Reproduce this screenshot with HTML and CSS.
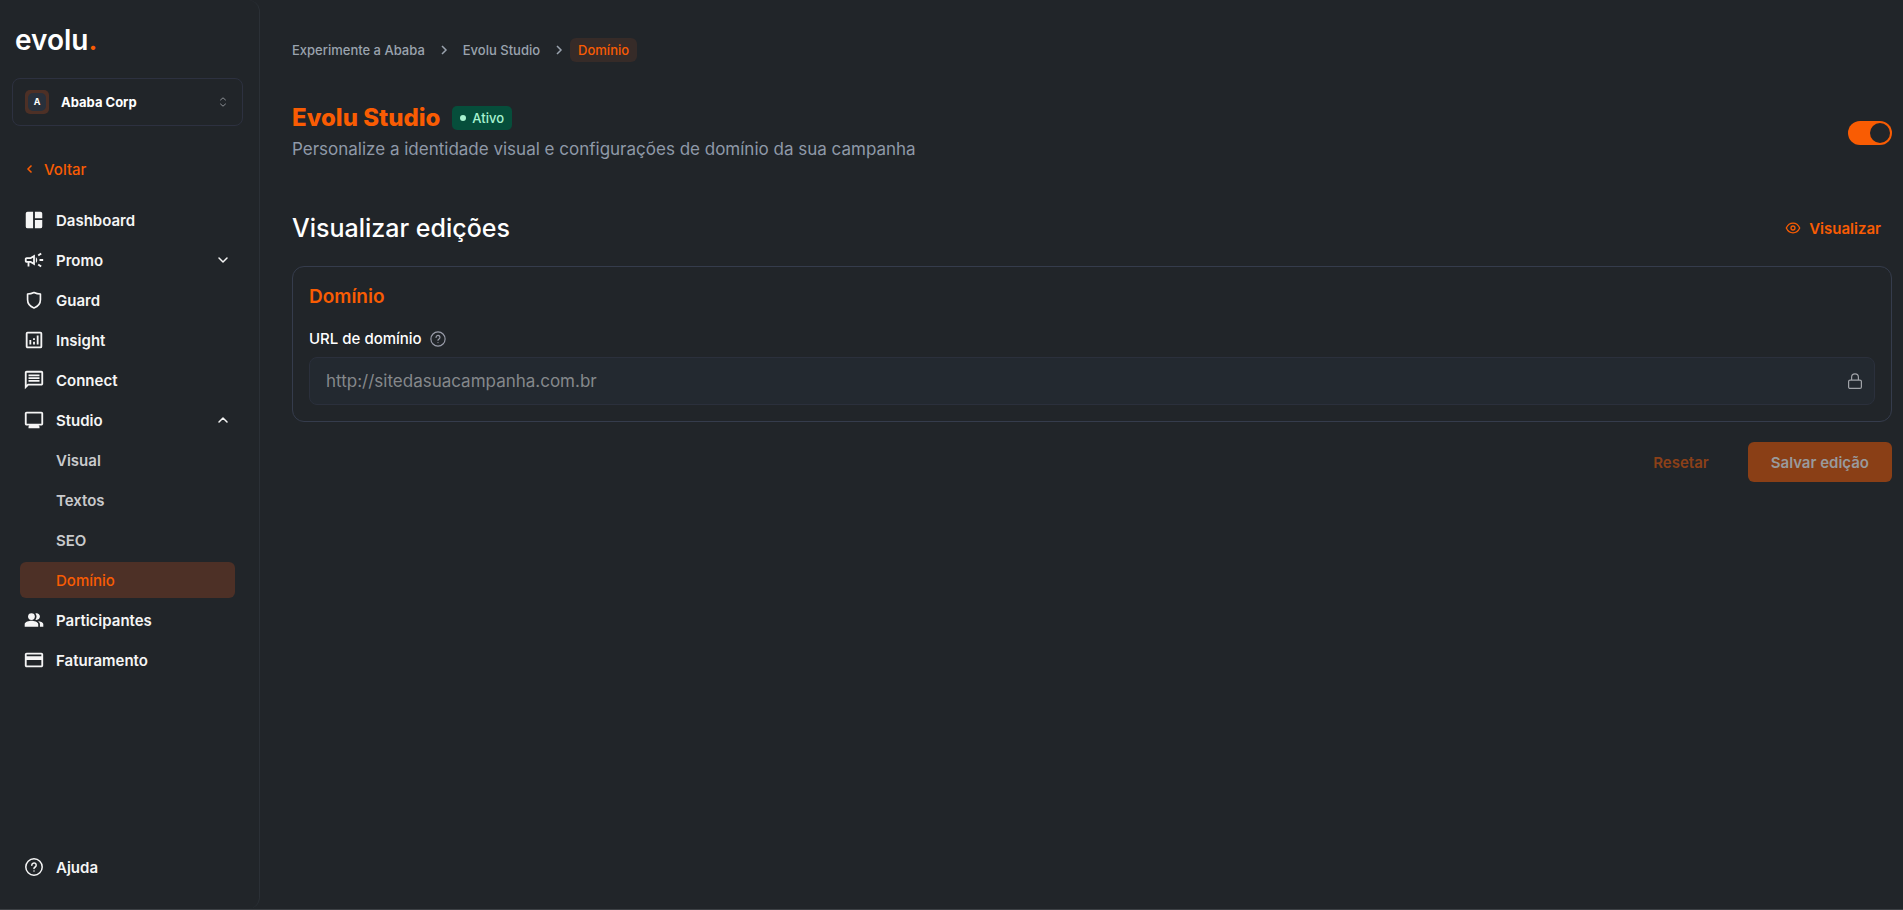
FILE: index.html
```html
<!DOCTYPE html>
<html lang="pt-BR">
    <head>
        <title>Evolu Studio - Domínio</title>
        <meta charset="utf-8" />
        <meta name="viewport" content="width=device-width, initial-scale=1">
        <link rel="stylesheet" href="styles.css">
    </head>

    <body>
        <div class="app">
            <aside class="sidebar">
                <a href="#" class="logo">evolu<span class="logo-dot">.</span></a>

                <button type="button" class="company">
                    <span class="company-avatar"><span class="company-letter">A</span></span>
                    <span class="company-name">Ababa Corp</span>
                    <svg class="company-arrows" width="14" height="14" viewBox="0 0 14 14" fill="none" stroke="currentColor" stroke-linecap="round" stroke-linejoin="round"><path d="M4.500 5 7 2.800 9.500 5M4.500 9 7 11.200 9.500 9"/></svg>
                </button>

                <a href="#" class="back">
                    <svg width="8" height="12" viewBox="0 0 8 12" fill="none" stroke="currentColor" stroke-width="1.500"><path d="M5.500 2.500 2 6l3.500 3.500"/></svg>
                    Voltar
                </a>

                <nav class="menu">
                    <a href="#" class="menu-item">
                        <svg class="icon" viewBox="0 0 24 24" fill="currentColor"><path d="M11 21H5a2 2 0 0 1-2-2V5a2 2 0 0 1 2-2h6zM13 21h6a2 2 0 0 0 2-2v-7h-8zM21 10V5a2 2 0 0 0-2-2h-6v7z"/></svg>
                        Dashboard
                    </a>
                    <a href="#" class="menu-item">
                        <svg class="icon" viewBox="0 0 24 24" fill="currentColor"><path d="M18 11v2h4v-2h-4zm-2 6.610c.960.710 2.210 1.650 3.200 2.390.4-.530.8-1.070 1.200-1.600-.990-.740-2.240-1.680-3.200-2.400-.4.540-.8 1.080-1.200 1.610zM20.400 5.600c-.4-.530-.8-1.070-1.200-1.600-.990.740-2.240 1.680-3.200 2.400.4.530.8 1.070 1.200 1.600.960-.720 2.210-1.650 3.200-2.400zM4 9c-1.100 0-2 .9-2 2v2c0 1.100.9 2 2 2h1v4h2v-4h1l5 3V6L8 9H4zm5.030 1.710L11 9.530v4.940l-1.970-1.180-.480-.290H4v-2h4.550l.480-.290zM15.500 12c0-1.330-.580-2.530-1.500-3.350v6.690c.920-.810 1.500-2.010 1.500-3.340z"/></svg>
                        Promo
                        <svg class="chevron" width="12" height="12" viewBox="0 0 12 12" fill="none" stroke="currentColor" stroke-width="1.500" stroke-linecap="round" stroke-linejoin="round"><path d="M2 4l4 4 4-4"/></svg>
                    </a>
                    <a href="#" class="menu-item">
                        <svg class="icon" viewBox="0 0 24 24" fill="none" stroke="currentColor" stroke-width="1.800" stroke-linejoin="round"><path d="M12 3.800C14.400 5 16.800 5.500 19 5.500v6.300c0 4-2.600 7.300-7 8.900-4.400-1.600-7-4.900-7-8.900V5.500c2.200 0 4.600-.5 7-1.700z"/></svg>
                        Guard
                    </a>
                    <a href="#" class="menu-item">
                        <svg class="icon" viewBox="0 0 24 24" fill="currentColor"><path fill-rule="evenodd" d="M19 3H5a2 2 0 0 0-2 2v14c0 1.100.9 2 2 2h14a2 2 0 0 0 2-2V5a2 2 0 0 0-2-2zm0 16H5V5h14z"/><path d="M7 12h2v5H7zM15 7h2v10h-2zM11 14h2v3h-2zM11 10h2v2h-2z"/></svg>
                        Insight
                    </a>
                    <a href="#" class="menu-item">
                        <svg class="icon" viewBox="0 0 24 24" fill="currentColor"><path d="M4 2h16c1.100 0 2 .9 2 2v12c0 1.100-.9 2-2 2H6l-4 4V4c0-1.100.9-2 2-2zm0 2v13.170L5.170 16H20V4H4zm2 8h12v2H6zm0-3h12v2H6zm0-3h12v2H6z"/></svg>
                        Connect
                    </a>
                    <a href="#" class="menu-item">
                        <svg class="icon" viewBox="0 0 24 24" fill="currentColor"><path d="M20 3H4c-1.100 0-2 .9-2 2v11c0 1.100.9 2 2 2h3l-1 1v2h12v-2l-1-1h3c1.100 0 2-.9 2-2V5c0-1.100-.9-2-2-2zm0 13H4V5h16v11z"/></svg>
                        Studio
                        <svg class="chevron" width="12" height="12" viewBox="0 0 12 12" fill="none" stroke="currentColor" stroke-width="1.500" stroke-linecap="round" stroke-linejoin="round"><path d="M2 8l4-4 4 4"/></svg>
                    </a>
                    <a href="#" class="menu-item submenu-item">Visual</a>
                    <a href="#" class="menu-item submenu-item">Textos</a>
                    <a href="#" class="menu-item submenu-item">SEO</a>
                    <a href="#" class="menu-item submenu-item active">Domínio</a>
                    <a href="#" class="menu-item">
                        <svg class="icon" viewBox="-1 -1 26 26" fill="currentColor"><path d="M16.670 13.130C18.040 14.060 19 15.320 19 17v3h4v-3c0-2.180-3.570-3.470-6.330-3.870z"/><circle cx="9" cy="8" r="4"/><path d="M15 12c2.210 0 4-1.790 4-4s-1.790-4-4-4c-.470 0-.910.100-1.330.240C14.500 5.270 15 6.580 15 8s-.5 2.730-1.330 3.760c.420.140.860.240 1.330.240zM9 13c-2.670 0-8 1.340-8 4v3h16v-3c0-2.660-5.330-4-8-4z"/></svg>
                        Participantes
                    </a>
                    <a href="#" class="menu-item">
                        <svg class="icon" viewBox="0 0 24 24" fill="currentColor"><path d="M20 4H4c-1.110 0-1.990.890-1.990 2L2 18c0 1.110.890 2 2 2h16c1.110 0 2-.890 2-2V6c0-1.110-.890-2-2-2zm0 14H4v-6h16v6zm0-10H4V6h16v2z"/></svg>
                        Faturamento
                    </a>
                </nav>

                <a href="#" class="menu-item help">
                    <svg class="icon" viewBox="-2 -2 22 22" fill="none" stroke="currentColor" stroke-width="1.500" stroke-linecap="round"><circle cx="9" cy="9" r="8.200"/><path d="M6.800 7.200a2.200 2.200 0 1 1 3.400 1.800c-.8.500-1.200.9-1.200 1.500M9 12.900v.1"/></svg>
                    Ajuda
                </a>
            </aside>

            <main class="content">
                <nav class="breadcrumb">
                    <a href="#">Experimente a Ababa</a>
                    <svg width="8" height="12" viewBox="0 0 8 12" fill="none" stroke="currentColor" stroke-width="1.500"><path d="M2 2l4 4-4 4"/></svg>
                    <a href="#">Evolu Studio</a>
                    <svg width="8" height="12" viewBox="0 0 8 12" fill="none" stroke="currentColor" stroke-width="1.500"><path d="M2 2l4 4-4 4"/></svg>
                    <a href="#" class="current">Domínio</a>
                </nav>

                <header class="page-header">
                    <div>
                        <div class="title-row">
                            <h1>Evolu Studio</h1>
                            <span class="status">Ativo</span>
                        </div>
                        <p class="subtitle">Personalize a identidade visual e configurações de domínio da sua campanha</p>
                    </div>
                    <input type="checkbox" class="toggle" aria-label="Ativar Evolu Studio" checked>
                </header>

                <div class="section-header">
                    <h2>Visualizar edições</h2>
                    <button type="button" class="preview">
                        <svg width="16" height="16" viewBox="0 0 16 16" fill="none" stroke="currentColor" stroke-width="1.300"><path d="M1.300 8C2.800 4.800 5.200 3.200 8 3.200S13.200 4.800 14.700 8c-1.500 3.200-3.900 4.800-6.700 4.800S2.800 11.200 1.300 8z"/><circle cx="8" cy="8" r="2"/></svg>
                        Visualizar
                    </button>
                </div>

                <form>
                    <section class="card">
                        <h3>Domínio</h3>
                        <div class="label-row">
                            <label for="domain">URL de domínio</label>
                            <svg width="16" height="16" viewBox="0 0 18 18" fill="none" stroke="currentColor" stroke-width="1.300" stroke-linecap="round"><circle cx="9" cy="9" r="8"/><path d="M6.800 7.200a2.200 2.200 0 1 1 3.400 1.800c-.8.500-1.200.9-1.200 1.500M9 12.900v.1"/></svg>
                        </div>
                        <div class="field">
                            <input type="text" id="domain" name="domain" placeholder="http://sitedasuacampanha.com.br" disabled>
                            <svg width="16" height="16" viewBox="0 0 16 16" fill="none" stroke="currentColor" stroke-width="1.200"><rect x="1.600" y="7.100" width="12.800" height="8.300" rx="1.500"/><path d="M4.600 7V4.200a3.400 3.400 0 0 1 6.800 0V7"/></svg>
                        </div>
                    </section>

                    <div class="actions">
                        <button type="reset" class="btn btn-reset" disabled>Resetar</button>
                        <button type="submit" class="btn btn-save" disabled>Salvar edição</button>
                    </div>
                </form>
            </main>
        </div>
    </body>
</html>
```
FILE: styles.css
```css
* {
    box-sizing: border-box;
}

body {
    margin: 0;
    background-color: #212529;
    color: #ffffff;
    font-family: Inter, "Open Sans", sans-serif;
    font-size: 15px;
}

a {
    color: inherit;
    text-decoration: none;
}

button, input {
    font-family: inherit;
}

h1, h2, h3, p {
    margin: 0;
}

svg {
    flex-shrink: 0;
}

.app {
    display: flex;
    min-height: 100vh;
    border-bottom: 1px solid #3d4145;
}

/* Sidebar */
.sidebar {
    display: flex;
    flex-direction: column;
    flex-shrink: 0;
    width: 260px;
    padding: 20px 16px 24px 12px;
    border-right: 1px solid #2b3036;
    border-radius: 0 12px 12px 0;
}

.logo {
    margin-left: 3px;
    font-size: 28px;
    font-weight: 600;
    line-height: 40px;
}

.logo-dot {
    color: #f95c03;
}

.company {
    display: flex;
    align-items: center;
    gap: 12px;
    height: 48px;
    margin-top: 18px;
    padding: 0 12px;
    background: none;
    border: 1px solid #2d3140;
    border-radius: 8px;
    color: #ffffff;
    cursor: pointer;
}

.company-avatar {
    display: flex;
    align-items: center;
    justify-content: center;
    width: 24px;
    height: 24px;
    background-color: #4d3026;
    border-radius: 5px;
}

.company-letter {
    width: 18px;
    background-color: #28303b;
    border-radius: 5px;
    font-size: 9px;
    font-weight: 700;
    line-height: 18px;
}

.company-name {
    font-size: 13px;
    font-weight: 700;
}

.company-arrows {
    margin-left: auto;
    color: #8b8f94;
}

.back {
    display: flex;
    align-items: center;
    gap: 10px;
    height: 36px;
    margin: 25px 8px 15px;
    padding-left: 6px;
    color: #f95c03;
    font-weight: 500;
}

.menu {
    display: flex;
    flex-direction: column;
    gap: 4px;
}

.menu-item {
    display: flex;
    align-items: center;
    gap: 11px;
    height: 36px;
    margin: 0 8px;
    padding: 0 6px 0 3px;
    border-radius: 6px;
    color: #f5f5f5;
    font-weight: 600;
}

.icon {
    width: 22px;
    height: 22px;
}

.chevron {
    margin-left: auto;
}

.submenu-item {
    padding-left: 36px;
    color: #c9cacc;
}

.active {
    background-color: #4d3026;
    color: #f95c03;
    font-weight: 500;
}

.help {
    margin-top: auto;
}

/* Main content */
.content {
    flex: 1;
    padding: 38px 11px 0 32px;
}

.breadcrumb {
    display: flex;
    align-items: center;
    gap: 15px;
    height: 24px;
    color: #9aa3ae;
    font-size: 13px;
    font-weight: 500;
}

.breadcrumb .current {
    margin-left: -8px;
    padding: 0 8px;
    background-color: #362b28;
    border-radius: 6px;
    color: #f95c03;
    line-height: 24px;
}

.page-header {
    display: flex;
    align-items: center;
    justify-content: space-between;
    margin-top: 40px;
}

.title-row {
    display: flex;
    align-items: center;
    gap: 12px;
}

h1 {
    color: #f95c03;
    font-size: 24px;
    font-weight: 800;
    line-height: 32px;
}

.status {
    display: flex;
    align-items: center;
    gap: 6px;
    height: 24px;
    padding: 0 8px;
    background-color: #064e3b;
    border-radius: 5px;
    color: #a7f3d0;
    font-size: 13px;
    font-weight: 500;
}

.status::before {
    content: "";
    width: 6px;
    height: 6px;
    background-color: #a7f3d0;
    border-radius: 50%;
}

.subtitle {
    color: #8f99a8;
    font-size: 17px;
    line-height: 30px;
}

.toggle {
    appearance: none;
    display: flex;
    justify-content: flex-end;
    width: 44px;
    height: 24px;
    margin: 0;
    padding: 2px;
    background-color: #f95c03;
    border-radius: 12px;
    cursor: pointer;
}

.toggle::before {
    content: "";
    width: 20px;
    height: 20px;
    background-color: #212529;
    border-radius: 50%;
}

.section-header {
    display: flex;
    align-items: center;
    justify-content: space-between;
    height: 40px;
    margin-top: 44px;
}

h2 {
    font-size: 25px;
    font-weight: 500;
}

.preview {
    display: flex;
    align-items: center;
    gap: 8px;
    padding: 8px 11px;
    background: none;
    border: none;
    color: #f95c03;
    font-size: 15px;
    font-weight: 600;
    cursor: pointer;
}

.card {
    margin-top: 18px;
    padding: 16px;
    border: 1px solid #353c4c;
    border-radius: 12px;
}

h3 {
    color: #f95c03;
    font-size: 19px;
    font-weight: 600;
    line-height: 28px;
}

.label-row {
    display: flex;
    align-items: center;
    gap: 8px;
    margin: 16px 0 6px;
    color: #9a9daa;
    line-height: 24px;
}

.label-row label {
    color: #ffffff;
    font-weight: 500;
}

.field {
    display: flex;
    align-items: center;
    height: 48px;
    padding: 0 11px 0 16px;
    background-color: #232930;
    border: 1px solid #2b303c;
    border-radius: 8px;
    color: #a0a3a8;
}

.field input {
    flex: 1;
    min-width: 0;
    padding: 0;
    background: none;
    border: none;
    font-size: 17px;
}

.field input::placeholder {
    color: #85888b;
}

.actions {
    display: flex;
    justify-content: flex-end;
    gap: 16px;
    margin-top: 20px;
}

.btn {
    height: 40px;
    padding: 0 23px;
    border: none;
    border-radius: 6px;
    font-size: 15px;
    font-weight: 600;
}

.btn-reset {
    background: none;
    color: #8c4018;
}

.btn-save {
    background-color: #8a3f16;
    color: #999a9c;
}
```
